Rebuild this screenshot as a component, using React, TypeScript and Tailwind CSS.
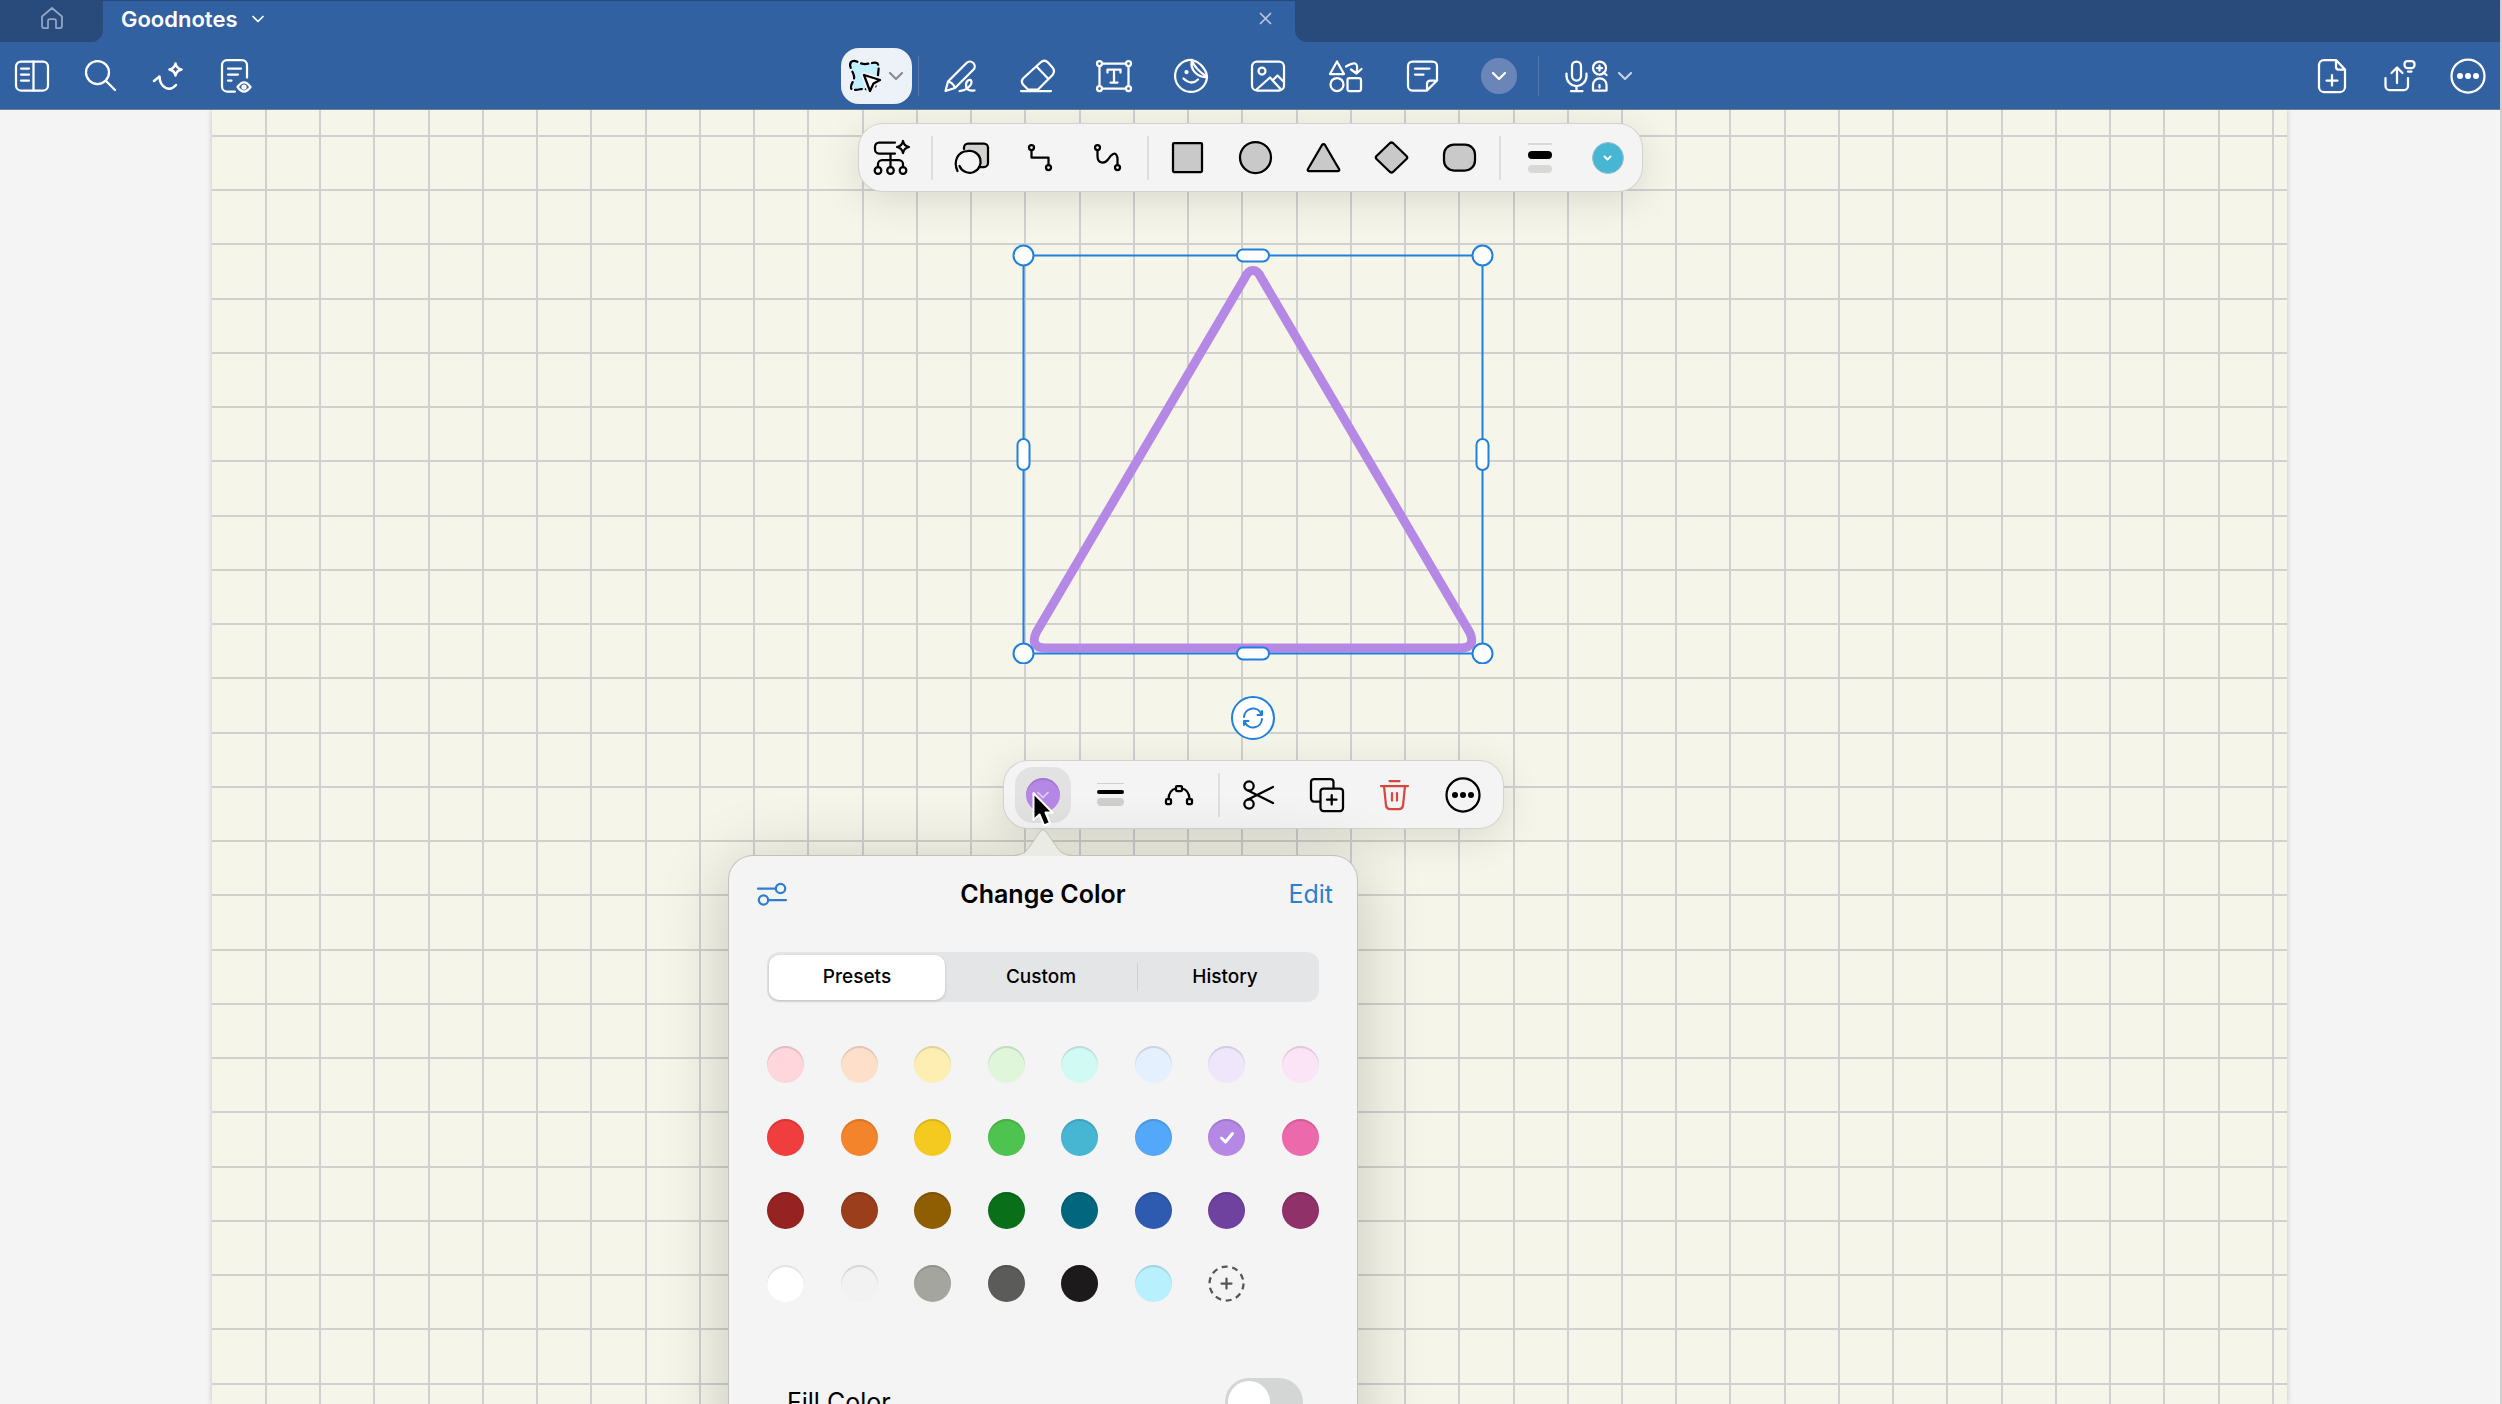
import React, { useState } from 'react'
import { clsx } from 'clsx'

type IconProps = {
    w: number
    h: number
    sw?: number
    className?: string
    children: React.ReactNode
}

const Icon = ({ w, h, sw = 2.25, className, children }: IconProps) => (
    <svg
        width={w}
        height={h}
        viewBox={`0 0 ${w} ${h}`}
        fill="none"
        stroke="currentColor"
        strokeWidth={sw}
        strokeLinecap="round"
        strokeLinejoin="round"
        aria-hidden="true"
        className={clsx('shrink-0 overflow-visible', className)}
    >
        {children}
    </svg>
)

const Chevron = ({ className }: { className?: string }) => (
    <Icon w={14} h={8} className={className}>
        <path d="M1 1l6 6 6-6" />
    </Icon>
)

const SmallChevron = ({ className }: { className?: string }) => (
    <Icon w={12} h={6} sw={1.75} className={className}>
        <path d="M1 0.5l5 5 5-5" />
    </Icon>
)

const DotsIcon = () => (
    <Icon w={36} h={36}>
        <circle cx="18" cy="18" r="16.5" />
        <g fill="currentColor" stroke="none">
            <circle cx="10" cy="18" r="3" />
            <circle cx="18" cy="18" r="3" />
            <circle cx="26" cy="18" r="3" />
        </g>
    </Icon>
)

const leftTools = [
    {
        label: 'Sidebar',
        icon: (
            <Icon w={34} h={32}>
                <rect x="1" y="1.5" width="32" height="29" rx="5" />
                <path d="M18.5 1.5v29M6 8.5h8M6 14.5h8M6 20.5h8" />
            </Icon>
        )
    },
    {
        label: 'Search',
        icon: (
            <Icon w={31} h={31}>
                <circle cx="12.5" cy="12.5" r="11.5" />
                <path d="M21 21l9 9" />
            </Icon>
        )
    },
    {
        label: 'Ask AI',
        icon: (
            <Icon w={30} h={30} sw={2.5}>
                <path d="M1 20l5.500-4.500C7 27.500 17 31 23 24" />
                <path d="M22.500 2.500Q23.500 7.500 28.500 8.500Q23.500 9.500 22.500 14.500Q21.500 9.500 16.500 8.500Q21.500 7.500 22.500 2.500z" />
            </Icon>
        )
    },
    {
        label: 'Reading mode',
        icon: (
            <Icon w={30} h={34}>
                <path d="M14 32.500H6a5 5 0 0 1-5-5V6a5 5 0 0 1 5-5h15a5 5 0 0 1 5 5v12.500M7 9.500h13M7 15.500h10M7 21.500h3.500" />
                <path d="M16.500 28Q23 18.500 29.500 28Q23 37 16.500 28z" />
                <circle cx="23" cy="28" r="1.5" />
            </Icon>
        )
    }
]

const centerTools = [
    {
        label: 'Pen',
        icon: (
            <Icon w={32} h={32}>
                <path d="M1.500 31L4 21.500 22.500 3a4.800 4.800 0 0 1 6.800 6.800L11 28zM4 21.500q5 1 7 6.500" />
                <path d="M15.500 31c6 0 12.500-5.500 12-9.500-1-3.500-5.500-1-5.500 3.500 0 5 3 6 8.500 5.500" />
            </Icon>
        )
    },
    {
        label: 'Eraser',
        icon: (
            <Icon w={35} h={32}>
                <path d="M3.500 18L20.500 2.500q4-3.500 7.500 0l4.500 5q3 3.500 0 7.500L18 29.500H8L3 24.500q-2.500-3.500.5-6.500zM16.500 6.500L28 18.500M1 31h30" />
            </Icon>
        )
    },
    {
        label: 'Text',
        icon: (
            <Icon w={36} h={32}>
                <path d="M6.500 3.500h23M6.500 28.500h23M3.500 6.500v19M32.500 6.500v19" />
                <circle cx="3.5" cy="3.5" r="2.5" />
                <circle cx="32.5" cy="3.5" r="2.5" />
                <circle cx="3.5" cy="28.500" r="2.5" />
                <circle cx="32.5" cy="28.500" r="2.5" />
                <path d="M11.500 12.500V9.500h13v3M18 9.500V22.500M14.500 22.500h7" />
            </Icon>
        )
    },
    {
        label: 'Stickers',
        icon: (
            <Icon w={34} h={34}>
                <path d="M18 1A16 16 0 1 0 33 18.500" />
                <path d="M18 1C15.500 11 23 18 33 18.500 33 11 26 3 18 1zM18 1q2 8 15 17" />
                <path d="M9.500 19.500q8 7.500 14.500 1" />
                <circle cx="12.5" cy="13" r="1" fill="currentColor" />
            </Icon>
        )
    },
    {
        label: 'Image',
        icon: (
            <Icon w={34} h={32}>
                <rect x="1" y="1.500" width="32" height="29" rx="5" />
                <circle cx="11" cy="11" r="3.500" />
                <path d="M5.500 29.500L19 17.500l11 12M22 20l4.500-4.500 6 6" />
            </Icon>
        )
    },
    {
        label: 'Elements',
        icon: (
            <Icon w={33} h={32}>
                <path d="M8 1.500L1 14h14z" />
                <circle cx="8" cy="24.500" r="6.500" />
                <rect x="18.500" y="18" width="13.500" height="13" rx="2" />
                <path d="M17 6.500C25 2 30 1 27.500 13M22 9.500l5.500 4 5-4.500" />
            </Icon>
        )
    },
    {
        label: 'Sticky note',
        icon: (
            <Icon w={31} h={32}>
                <path d="M20 30.500H5.500a4.500 4.500 0 0 1-4.500-4.500V6a4.500 4.500 0 0 1 4.500-4.500h20A4.500 4.500 0 0 1 30 6v14.500zM20 30.500V24q0-3.500 3.500-3.500H30M8 8.500h14.500M8 14.500h8.500" />
            </Icon>
        )
    }
]

const rightTools = [
    {
        label: 'Add page',
        icon: (
            <Icon w={28} h={34}>
                <path d="M18 1H6a5 5 0 0 0-5 5v22a5 5 0 0 0 5 5h16a5 5 0 0 0 5-5V10.500zM18 1v7q0 2.500 2.500 2.500H27M14 16v10.500M8.500 21.500h11" />
            </Icon>
        )
    },
    {
        label: 'Share',
        icon: (
            <Icon w={32} h={31}>
                <path d="M1.500 18v8a4 4 0 0 0 4 4h14.500a4 4 0 0 0 4-4v-8M13 23V8.500M7.500 13L13 7.500l5.500 5.500M24 11.500h3.500" />
                <rect x="20.5" y="1" width="10" height="7" rx="3" />
            </Icon>
        )
    },
    { label: 'More', icon: <DotsIcon /> }
]

const connectorTools = [
    {
        label: 'Basic shapes',
        icon: (
            <Icon w={35} h={32}>
                <path d="M10 7V5.500a4 4 0 0 1 4-4h16a4 4 0 0 1 4 4v15.500a4 4 0 0 1-4 4h-5.500" fill="#d2d2d1" />
                <circle cx="13.5" cy="20" r="11.500" fill="#f4f4f4" stroke="none" />
                <path d="M3.500 29C-1 19 4 9 13.500 9a11 11 0 1 1-8 15" />
            </Icon>
        )
    },
    {
        label: 'Elbow connector',
        icon: (
            <Icon w={24} h={27}>
                <circle cx="3.5" cy="3.5" r="2.500" />
                <circle cx="20.5" cy="23.5" r="2.500" />
                <path d="M3.500 6v7.500h17V21" />
            </Icon>
        )
    },
    {
        label: 'Curved connector',
        icon: (
            <Icon w={27} h={27}>
                <circle cx="3.5" cy="3.5" r="2.500" />
                <circle cx="23.500" cy="23.5" r="2.500" />
                <path d="M3.500 6v6c0 8 7 8 10.500 3.500C16.500 11.500 22 5.500 23.500 14V21" />
            </Icon>
        )
    }
]

const shapeTools = [
    { label: 'Square', icon: <rect x="2" y="2" width="29" height="29" rx="1" /> },
    { label: 'Circle', icon: <circle cx="16.5" cy="16.500" r="15.500" /> },
    { label: 'Triangle', icon: <path d="M15 4q1.500-2 3 0l14 24q1 2-1 2H2q-2 0-1-2z" /> },
    { label: 'Diamond', icon: <path d="M15 2q1.500-1 3 0l13.500 13q1.500 1.500 0 3L18 31q-1.500 1-3 0L1.500 18q-1.500-1.500 0-3z" /> },
    { label: 'Rounded rectangle', icon: <rect x="1" y="3.500" width="31" height="26" rx="10" /> }
]

const swatches = [
    'bg-[#fed6db]', 'bg-[#fedfca]', 'bg-[#feeeb2]', 'bg-[#dff6da]', 'bg-[#d2faf4]', 'bg-[#e5f0fe]', 'bg-[#efe6fc]', 'bg-[#fce4f7]',
    'bg-[#f03d3d]', 'bg-[#f4842b]', 'bg-[#f4ca20]', 'bg-[#4ec34f]', 'bg-[#47b6d3]', 'bg-[#54a8f9]', 'bg-[#b588e6]', 'bg-[#ec69ac]',
    'bg-[#962321]', 'bg-[#9a3e1c]', 'bg-[#8f5d02]', 'bg-[#097019]', 'bg-[#02667f]', 'bg-[#2e5ab0]', 'bg-[#6f42a0]', 'bg-[#903269]',
    'bg-white', 'bg-[#f2f2f2]', 'bg-[#a5a59f]', 'bg-[#5b5b59]', 'bg-[#1c1a1b]', 'bg-[#b8f0fe]'
]

const tabs = ['Presets', 'Custom', 'History']

// rule spacing of the squared paper, lines snapped to whole pixels
const RULE = 54.24
const columns = Array.from({ length: 70 }, (_, i) => Math.round(54 + i * RULE))
const rows = Array.from({ length: 40 }, (_, i) => Math.round(26 + i * RULE))

const Divider = () => <span className="mx-[5px] h-11 w-0.5 shrink-0 bg-[#dfdfdf]" />

function TabBar() {
    return (
        <div className="flex h-[42px] border-t border-[#284978]">
            <button aria-label="Home" className="flex w-[103px] items-center justify-center rounded-br-xl bg-[#284b7c] pb-2 text-[#93a6c4]">
                <Icon w={22} h={22} sw={1.75}>
                    <path d="M1 9.500L11 1l10 8.500V19a2 2 0 0 1-2 2h-4v-7q0-2-2-2H9q-2 0-2 2v7H3a2 2 0 0 1-2-2z" />
                </Icon>
            </button>
            <div className="flex w-[1192px] items-center justify-between pr-6 pb-1.5 pl-[18px]">
                <button className="flex items-center gap-3.5 text-[22px] leading-8 font-semibold text-white">
                    Goodnotes
                    <SmallChevron />
                </button>
                <button aria-label="Close tab" className="text-[#b9c8df]">
                    <Icon w={11} h={11} sw={1.75}>
                        <path d="M0.500 0.500l10 10M10.500 0.500l-10 10" />
                    </Icon>
                </button>
            </div>
            <div className="flex-1 rounded-bl-xl bg-[#284b7c]" />
        </div>
    )
}

function ToolBar() {
    return (
        <div className="grid h-[68px] grid-cols-[1fr_auto_1fr] items-center border-b border-[#6f7f92] text-white">
            <div className="flex gap-1">
                {leftTools.map((t) => (
                    <button key={t.label} aria-label={t.label} className="flex h-14 w-16 items-center justify-center">
                        {t.icon}
                    </button>
                ))}
            </div>

            <div className="flex items-center">
                <button aria-label="Lasso" className="flex h-14 w-[71px] items-center justify-center gap-2 rounded-[18px] bg-[#edf1f8] text-black">
                    <Icon w={32} h={33}>
                        <path
                            d="M2 3C6-1 9 5 16 5c5 0 8-2 12-1 3 3 1 8 1 13l-3 12c-5 2-10 1-14 1-4 1-9 2-10-1-1-4 4-7 3-12C4 12-1 7 2 3z"
                            fill="#c3f0fc"
                            strokeDasharray="7 4"
                        />
                        <path d="M15 16l16 5-6.500 3.500L21 32z" fill="#fff" stroke="#edf1f8" strokeWidth="6" />
                        <path d="M15 16l16 5-6.500 3.500L21 32z" fill="#fff" />
                    </Icon>
                    <Chevron className="text-[#8a8d92]" />
                </button>
                <span className="mr-[3px] ml-1.5 h-10 w-px bg-[#5077b0]" />
                {centerTools.map((t) => (
                    <button key={t.label} aria-label={t.label} className="flex h-14 w-[77px] items-center justify-center">
                        {t.icon}
                    </button>
                ))}
                <button aria-label="More tools" className="flex h-14 w-[77px] items-center justify-center">
                    <span className="flex size-9 items-center justify-center rounded-full bg-[#6a86b8]">
                        <Chevron />
                    </span>
                </button>
                <span className="h-10 w-px bg-[#5077b0]" />
                <button aria-label="Record" className="flex h-14 items-center gap-2.5 pr-7 pl-[26px]">
                    <Icon w={43} h={32}>
                        <rect x="7" y="1.500" width="9" height="19" rx="4.500" />
                        <path d="M1.500 13.500V16a10 10 0 0 0 20 0v-2.500M11.500 26v5M6 31h11.500" />
                        <circle cx="34.5" cy="8" r="6.500" />
                        <path d="M38.500 12.500l3 2.500M34.500 5.500v5M32 8h5M28 30.500V25a6.500 6.500 0 0 1 13.500 0v5.500zM34.500 25v2.500" />
                    </Icon>
                    <Chevron className="text-[#c3d0e4]" />
                </button>
            </div>

            <div className="flex justify-end gap-1">
                {rightTools.map((t) => (
                    <button key={t.label} aria-label={t.label} className="flex h-14 w-16 items-center justify-center">
                        {t.icon}
                    </button>
                ))}
            </div>
        </div>
    )
}

function ShapeBar() {
    return (
        <div className="flex h-[67px] items-center rounded-[24px] bg-[#f4f4f4] text-black shadow-[0_0_0_1px_#d3d3cf,0_8px_40px_rgba(0,0,0,0.12)]">
            <button aria-label="Mind map" className="flex h-14 w-[67px] items-center justify-center">
                <Icon w={36} h={35}>
                    <path d="M21 2.500H5a4 4 0 0 0-4 4v3a4 4 0 0 0 4 4h16M16.500 13.500V27M4 27v-3a4 4 0 0 1 4-4h17a4 4 0 0 1 4 4v3" />
                    <circle cx="4" cy="30.500" r="3.300" />
                    <circle cx="16.500" cy="30.500" r="3.300" />
                    <circle cx="29" cy="30.500" r="3.300" />
                    <path d="M29 1q1 5 6 6-5 1-6 6-1-5-6-6 5-1 6-6z" />
                </Icon>
            </button>
            <Divider />
            {connectorTools.map((t) => (
                <button key={t.label} aria-label={t.label} className="flex h-14 w-[68px] items-center justify-center">
                    {t.icon}
                </button>
            ))}
            <Divider />
            {shapeTools.map((t) => (
                <button key={t.label} aria-label={t.label} className="flex h-14 w-[68px] items-center justify-center">
                    <Icon w={33} h={33}>
                        <g fill="#c9c9c9">{t.icon}</g>
                    </Icon>
                </button>
            ))}
            <Divider />
            <button aria-label="Stroke width" className="flex h-14 w-[68px] flex-col items-center justify-center">
                <span className="h-0.5 w-6 bg-[#d8d8d6]" />
                <span className="my-1.5 h-2 w-6 rounded-full bg-black" />
                <span className="h-2 w-6 rounded bg-[#d8d8d6]" />
            </button>
            <button aria-label="Stroke color" className="flex h-14 w-[68px] items-center justify-center">
                <span className="flex size-8 items-center justify-center rounded-full border border-[#9cbfd6] bg-[#47b6d3] text-white">
                    <Icon w={7} h={4} sw={2}>
                        <path d="M0.500 0.500l3 3 3-3" />
                    </Icon>
                </span>
            </button>
        </div>
    )
}

function Selection() {
    return (
        <svg width="482" height="420" viewBox="0 0 482 420" fill="none" className="shrink-0">
            <path
                d="M233 33.500C237 24 245 24 249 33.500L457.500 388C462 397 460 404 449 404H33C22 404 20 397 24.500 388z"
                stroke="#b588e6"
                strokeWidth="9"
                strokeLinejoin="round"
            />
            <g stroke="#2080dc" strokeWidth="2" fill="#fff">
                <rect x="11.5" y="11.500" width="459" height="398" fill="none" />
                <circle cx="11.5" cy="11.500" r="10" />
                <circle cx="470.5" cy="11.500" r="10" />
                <circle cx="11.5" cy="409.500" r="10" />
                <circle cx="470.5" cy="409.500" r="10" />
                <rect x="225" y="5.500" width="32" height="12" rx="6" />
                <rect x="225" y="403.500" width="32" height="12" rx="6" />
                <rect x="5.500" y="195" width="12" height="31" rx="6" />
                <rect x="464.500" y="195" width="12" height="31" rx="6" />
            </g>
        </svg>
    )
}

function ColorPopover() {
    const [tab, setTab] = useState('Presets')
    const [selected, setSelected] = useState(14)
    const [fill, setFill] = useState(false)

    return (
        <div className="absolute top-full left-1/2 mt-7 w-[628px] -translate-x-1/2 rounded-[24px] bg-[#f4f4f4] pb-12 text-black shadow-[0_0_0_1px_#c2c2bd,0_8px_70px_rgba(0,0,0,0.2)]">
            <svg width="56" height="27" viewBox="0 0 56 27" className="absolute bottom-full left-1/2 -translate-x-1/2">
                <path d="M0 27C11 26 12 22 17 15 20 11 23 6 26 2.500q2-2 4 0C33 6 36 11 39 15 44 22 45 26 56 27z" fill="#ebebe6" />
                <path d="M0 26C11 25 12 21 17 14 20 10 23 5 26 1.500q2-2 4 0C33 5 36 10 39 14 44 21 45 25 56 26" fill="none" stroke="#c2c2bd" />
            </svg>

            <header className="grid h-[76px] grid-cols-3 items-center px-6">
                <button aria-label="Adjust" className="justify-self-start pl-1 text-[#2d7fd0]">
                    <Icon w={30} h={24}>
                        <path d="M1 6.500h17M12 18h17" />
                        <circle cx="23.500" cy="6.500" r="4.700" />
                        <circle cx="6.500" cy="18" r="4.700" />
                    </Icon>
                </button>
                <h2 className="text-center text-[25px] leading-8 font-semibold whitespace-nowrap">Change Color</h2>
                <button className="justify-self-end text-[25px] leading-8 text-[#2d7fd0]">Edit</button>
            </header>

            <div role="tablist" className="mx-[38px] mt-5 grid h-[50px] grid-cols-3 items-center rounded-xl bg-[#e4e5e7]">
                {tabs.map((t) => (
                    <button
                        key={t}
                        role="tab"
                        aria-selected={t === tab}
                        onClick={() => setTab(t)}
                        className={clsx(
                            'relative mr-1.5 ml-0.5 h-[45px] rounded-[10px] text-[19px] font-medium',
                            t === tab && 'bg-white shadow-[0_1px_3px_rgba(0,0,0,0.18)]'
                        )}
                    >
                        {t}
                        {t === 'History' && <span className="absolute top-2 left-0 h-7 w-px bg-[#cfd0d2]" />}
                    </button>
                ))}
            </div>

            <div className="mx-[38px] mt-11 grid grid-cols-[repeat(8,37px)] justify-between gap-y-9">
                {swatches.map((color, i) => (
                    <button
                        key={color}
                        aria-label={`Color ${i + 1}`}
                        onClick={() => setSelected(i)}
                        className={clsx(
                            'flex size-[37px] items-center justify-center rounded-full text-white shadow-[inset_0_2px_1px_rgba(0,0,0,0.12)]',
                            color
                        )}
                    >
                        {i === selected && (
                            <Icon w={14} h={12} sw={3}>
                                <path d="M1.500 6l4 4L12.500 1.500" />
                            </Icon>
                        )}
                    </button>
                ))}
                <button aria-label="Add color" className="text-[#555555]">
                    <Icon w={37} h={37}>
                        <circle cx="18.5" cy="18.500" r="17" strokeDasharray="6 4.680" strokeLinecap="butt" />
                        <path d="M18.500 13.500v10M13.500 18.500h10" />
                    </Icon>
                </button>
            </div>

            <label className="mt-[76px] flex items-center justify-between pr-[54px] pl-[58px] text-[25px] leading-8">
                Fill Color
                <input
                    type="checkbox"
                    checked={fill}
                    onChange={(e) => setFill(e.target.checked)}
                    className="h-12 w-[78px] appearance-none rounded-full bg-[#d4d5d5] p-[3px] before:block before:size-[42px] before:rounded-full before:bg-white before:content-[''] checked:bg-[#2d7fd0] checked:before:ml-[30px]"
                />
            </label>
        </div>
    )
}

function ContextBar() {
    return (
        <div className="relative flex h-[67px] items-center rounded-[24px] bg-[#f4f4f4] px-1.5 text-black shadow-[0_0_0_1px_#d3d3cf,0_8px_40px_rgba(0,0,0,0.12)]">
            <div className="relative flex h-full w-[67px] items-center justify-center">
                <button aria-label="Change color" className="flex size-14 items-center justify-center rounded-[18px] bg-[#e2e2e2]">
                    <span className="flex size-[34px] items-center justify-center rounded-full bg-[#b588e6] text-[#e3cff7] shadow-[inset_0_2px_1px_rgba(0,0,0,0.12)]">
                        <SmallChevron />
                    </span>
                </button>
                <ColorPopover />
                <svg width="22" height="36" viewBox="0 0 22 36" className="absolute top-[30px] left-[22px]">
                    <path d="M1.500 2v27l6-5.500 4.500 11 6-2.500-4.500-10.500h7z" fill="#000" stroke="#fff" strokeWidth="2" strokeLinejoin="round" />
                </svg>
            </div>
            <button aria-label="Stroke width" className="flex h-14 w-[68px] flex-col items-center justify-center">
                <span className="h-px w-[27px] bg-[#cfcfcd]" />
                <span className="mt-1.5 mb-1 h-1 w-[27px] rounded-full bg-black" />
                <span className="h-2 w-[27px] rounded bg-[#cfcfcd]" />
            </button>
            <button aria-label="Edit points" className="flex h-14 w-[68px] items-center justify-center">
                <Icon w={28} h={20}>
                    <rect x="11" y="1" width="6" height="5" rx="1" />
                    <rect x="1" y="14" width="5" height="5" rx="1" />
                    <rect x="22" y="14" width="5" height="5" rx="1" />
                    <path d="M3.500 14Q4 5 11 3.500M24.500 14Q24 5 17 3.500" />
                </Icon>
            </button>
            <Divider />
            <button aria-label="Cut" className="flex h-14 w-[68px] items-center justify-center">
                <Icon w={31} h={30}>
                    <circle cx="6" cy="6" r="4.700" />
                    <circle cx="6" cy="24" r="4.700" />
                    <path d="M5 10.500L30 23M5 19.500L30 7" />
                </Icon>
            </button>
            <button aria-label="Duplicate" className="flex h-14 w-[68px] items-center justify-center">
                <Icon w={34} h={34}>
                    <path d="M10 23.500H4a3 3 0 0 1-3-3V4a3 3 0 0 1 3-3h16.500a3 3 0 0 1 3 3v6" />
                    <rect x="10.500" y="10.500" width="22.500" height="22.500" rx="3" />
                    <path d="M21.700 17v9.500M17 21.700h9.500" />
                </Icon>
            </button>
            <button aria-label="Delete" className="flex h-14 w-[68px] items-center justify-center text-[#d6483f]">
                <Icon w={29} h={30}>
                    <path d="M9.500 1h10M1 6h27M4 6l2 19.500q.5 3.500 4 3.500h9q3.500 0 4-3.500L25 6M12 13v7.500M17 13v7.500" />
                </Icon>
            </button>
            <button aria-label="More actions" className="flex h-14 w-[68px] items-center justify-center">
                <DotsIcon />
            </button>
        </div>
    )
}

export default function App() {
    return (
        <div className="flex h-screen flex-col overflow-hidden border-r-2 border-[#cfcfcf] bg-[#f4f4f4] font-['Inter',sans-serif]">
            <header className="shrink-0 bg-[#3261a2]">
                <TabBar />
                <ToolBar />
            </header>

            <main className="relative flex-1 overflow-hidden pr-[213px] pl-[212px]">
                <div className="h-full overflow-hidden bg-[#f6f5e9] shadow-[0_0_6px_rgba(0,0,0,0.2)]">
                    <svg width="100%" height="100%" stroke="#d0d0cf" strokeWidth="2" aria-hidden="true">
                        {columns.map((x) => (
                            <line key={x} x1={x} x2={x} y1="0" y2="100%" />
                        ))}
                        {rows.map((y) => (
                            <line key={y} x1="0" x2="100%" y1={y} y2={y} />
                        ))}
                    </svg>
                </div>

                <div className="absolute inset-x-0 top-0 flex flex-col items-center pt-3.5">
                    <ShapeBar />
                    <div className="mt-[53px] flex flex-col items-center pl-1.5">
                        <Selection />
                        <button aria-label="Rotate" className="mt-8 flex size-11 items-center justify-center rounded-full border-2 border-[#2080dc] bg-white text-[#2080dc]">
                            <Icon w={20} h={20} sw={2}>
                                <path d="M1 9A9 9 0 0 1 18 5.500M19 3v4h-4.500M19 11A9 9 0 0 1 2 14.500M1 17v-4h4.500" />
                            </Icon>
                        </button>
                        <div className="mt-[21px]">
                            <ContextBar />
                        </div>
                    </div>
                </div>
            </main>
        </div>
    )
}
